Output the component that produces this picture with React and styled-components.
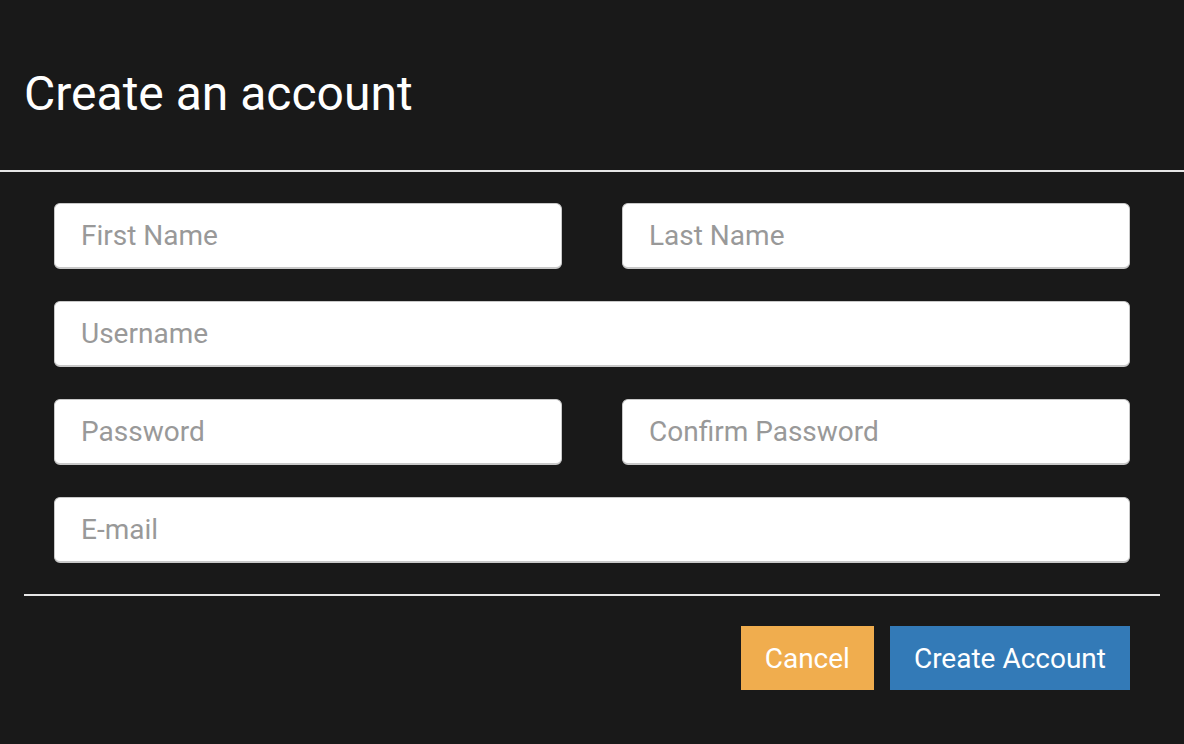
import React from "react"
import styled, { createGlobalStyle } from "styled-components"

const Global = createGlobalStyle`
  html, body {
    margin: 0;
    padding: 0;
    background: #191919;
    font-family: Roboto, "Liberation Sans", sans-serif;
  }
  * { box-sizing: border-box; }
`

const fields = [
  { name: "first", label: "First Name" },
  { name: "last", label: "Last Name" },
  { name: "username", label: "Username", wide: true },
  { name: "password", label: "Password", type: "password" },
  { name: "confirm", label: "Confirm Password", type: "password" },
  { name: "email", label: "E-mail", type: "email", wide: true },
]

const App = () => {
  return (
    <Modal>
      <Global />
      <Header>
        <Title>Create an account</Title>
      </Header>
      <Form>
        {fields.map((f) => (
          <Input
            key={f.name}
            name={f.name}
            type={f.type || "text"}
            placeholder={f.label}
            $wide={f.wide}
          />
        ))}
      </Form>
      <Footer>
        <Button $color="#f0ad4e">Cancel</Button>
        <Button $color="#337ab7">Create Account</Button>
      </Footer>
    </Modal>
  )
}

export default App

const Modal = styled.div`
  width: 100%;
  min-height: 744px;
  background: #191919;
  color: white;
`

const Header = styled.div`
  height: 172px;
  padding: 16px 24px 0;
  display: flex;
  align-items: center;
  border-bottom: 2px solid #e6e6e6;
`

const Title = styled.h1`
  margin: 0;
  font-size: 48px;
  font-weight: 400;
  color: #fff;
`

const Form = styled.div`
  display: grid;
  grid-template-columns: 1fr 1fr;
  column-gap: 60px;
  row-gap: 32px;
  padding: 31px 54px 31px;
`

const Input = styled.input`
  grid-column: ${(p) => (p.$wide ? "1 / -1" : "auto")};
  height: 66px;
  padding: 0 26px;
  border: 1px solid #c8c8c8;
  border-bottom-width: 2px;
  border-radius: 6px;
  background: #fff;
  font-family: Roboto, "Liberation Sans", sans-serif;
  font-size: 28px;
  color: #555;
  outline: none;
  &::placeholder {
    color: #999;
  }
`

const Footer = styled.div`
  margin: 0 24px;
  border-top: 2px solid #e6e6e6;
  padding: 30px 30px 0;
  display: flex;
  justify-content: flex-end;
  gap: 16px;
`

const Button = styled.button`
  height: 64px;
  padding: 0 24px;
  border: none;
  border-radius: 0;
  background: ${(p) => p.$color};
  color: #fff;
  font-family: Roboto, "Liberation Sans", sans-serif;
  font-size: 28px;
  cursor: pointer;
`
